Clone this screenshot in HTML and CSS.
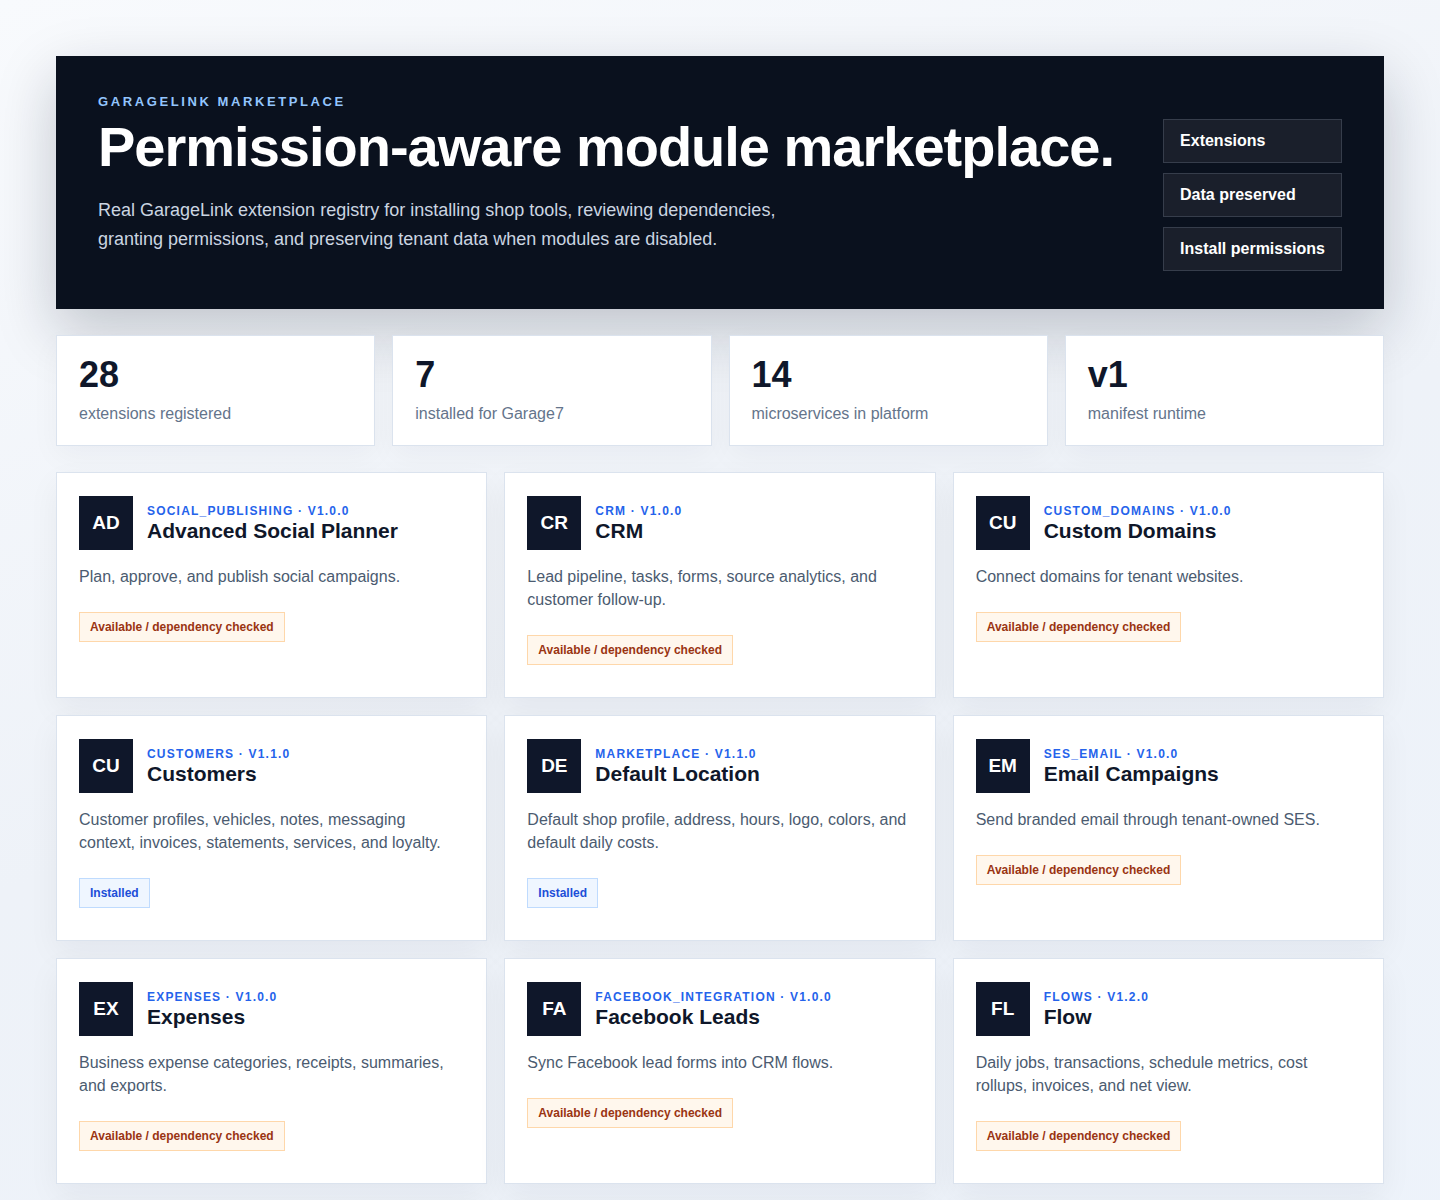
FILE: index.html
```html
<!DOCTYPE html>
<html lang="en">
<head>
    <meta charset="UTF-8">
    <meta name="viewport" content="width=device-width, initial-scale=1.0">
    <title>GarageLink Marketplace</title>
    <link rel="stylesheet" href="styles.css">
</head>
<body>
    <div class="page">
        <header class="hero">
            <div class="hero-copy">
                <div class="eyebrow">GarageLink Marketplace</div>
                <h1>Permission-aware module marketplace.</h1>
                <p>Real GarageLink extension registry for installing shop tools, reviewing dependencies, granting permissions, and preserving tenant data when modules are disabled.</p>
            </div>
            <nav class="hero-actions">
                <button type="button">Extensions</button>
                <button type="button">Data preserved</button>
                <button type="button">Install permissions</button>
            </nav>
        </header>

        <section class="stats">
            <div class="stat">
                <div class="stat-value">28</div>
                <div class="stat-label">extensions registered</div>
            </div>
            <div class="stat">
                <div class="stat-value">7</div>
                <div class="stat-label">installed for Garage7</div>
            </div>
            <div class="stat">
                <div class="stat-value">14</div>
                <div class="stat-label">microservices in platform</div>
            </div>
            <div class="stat">
                <div class="stat-value">v1</div>
                <div class="stat-label">manifest runtime</div>
            </div>
        </section>

        <section class="modules">
            <article class="module">
                <div class="module-head">
                    <div class="module-icon">AD</div>
                    <div>
                        <div class="module-meta">social_publishing · v1.0.0</div>
                        <h2>Advanced Social Planner</h2>
                    </div>
                </div>
                <p>Plan, approve, and publish social campaigns.</p>
                <span class="badge badge-available">Available / dependency checked</span>
            </article>

            <article class="module">
                <div class="module-head">
                    <div class="module-icon">CR</div>
                    <div>
                        <div class="module-meta">crm · v1.0.0</div>
                        <h2>CRM</h2>
                    </div>
                </div>
                <p>Lead pipeline, tasks, forms, source analytics, and customer follow-up.</p>
                <span class="badge badge-available">Available / dependency checked</span>
            </article>

            <article class="module">
                <div class="module-head">
                    <div class="module-icon">CU</div>
                    <div>
                        <div class="module-meta">custom_domains · v1.0.0</div>
                        <h2>Custom Domains</h2>
                    </div>
                </div>
                <p>Connect domains for tenant websites.</p>
                <span class="badge badge-available">Available / dependency checked</span>
            </article>

            <article class="module">
                <div class="module-head">
                    <div class="module-icon">CU</div>
                    <div>
                        <div class="module-meta">customers · v1.1.0</div>
                        <h2>Customers</h2>
                    </div>
                </div>
                <p>Customer profiles, vehicles, notes, messaging context, invoices, statements, services, and loyalty.</p>
                <span class="badge badge-installed">Installed</span>
            </article>

            <article class="module">
                <div class="module-head">
                    <div class="module-icon">DE</div>
                    <div>
                        <div class="module-meta">marketplace · v1.1.0</div>
                        <h2>Default Location</h2>
                    </div>
                </div>
                <p>Default shop profile, address, hours, logo, colors, and default daily costs.</p>
                <span class="badge badge-installed">Installed</span>
            </article>

            <article class="module">
                <div class="module-head">
                    <div class="module-icon">EM</div>
                    <div>
                        <div class="module-meta">ses_email · v1.0.0</div>
                        <h2>Email Campaigns</h2>
                    </div>
                </div>
                <p>Send branded email through tenant-owned SES.</p>
                <span class="badge badge-available">Available / dependency checked</span>
            </article>

            <article class="module">
                <div class="module-head">
                    <div class="module-icon">EX</div>
                    <div>
                        <div class="module-meta">expenses · v1.0.0</div>
                        <h2>Expenses</h2>
                    </div>
                </div>
                <p>Business expense categories, receipts, summaries, and exports.</p>
                <span class="badge badge-available">Available / dependency checked</span>
            </article>

            <article class="module">
                <div class="module-head">
                    <div class="module-icon">FA</div>
                    <div>
                        <div class="module-meta">facebook_integration · v1.0.0</div>
                        <h2>Facebook Leads</h2>
                    </div>
                </div>
                <p>Sync Facebook lead forms into CRM flows.</p>
                <span class="badge badge-available">Available / dependency checked</span>
            </article>

            <article class="module">
                <div class="module-head">
                    <div class="module-icon">FL</div>
                    <div>
                        <div class="module-meta">flows · v1.2.0</div>
                        <h2>Flow</h2>
                    </div>
                </div>
                <p>Daily jobs, transactions, schedule metrics, cost rollups, invoices, and net view.</p>
                <span class="badge badge-available">Available / dependency checked</span>
            </article>

            <article class="module">
                <div class="module-head">
                    <div class="module-icon">FO</div>
                    <div>
                        <div class="module-meta">forms · v1.0.0</div>
                        <h2>Forms</h2>
                    </div>
                </div>
                <p>Build intake forms and route submissions into CRM.</p>
                <span class="badge badge-available">Available / dependency checked</span>
            </article>

            <article class="module">
                <div class="module-head">
                    <div class="module-icon">GI</div>
                    <div>
                        <div class="module-meta">gift_cards · v1.0.0</div>
                        <h2>Gift Cards</h2>
                    </div>
                </div>
                <p>Sell and redeem shop gift cards.</p>
                <span class="badge badge-available">Available / dependency checked</span>
            </article>

            <article class="module">
                <div class="module-head">
                    <div class="module-icon">GO</div>
                    <div>
                        <div class="module-meta">google_business · v1.0.0</div>
                        <h2>Google Business</h2>
                    </div>
                </div>
                <p>Sync reviews and profile details from Google.</p>
                <span class="badge badge-available">Available / dependency checked</span>
            </article>
        </section>
    </div>
</body>
</html>
```

FILE: styles.css
```css
body {
    margin: 0;
    font-family: "Liberation Sans", Arial, sans-serif;
    color: #0f172a;
    background: linear-gradient(160deg, #f8fafd 0%, #eef2f8 45%, #edf3fb 100%);
    min-height: 100vh;
}
.page {
    max-width: 1328px;
    margin: 0 auto;
    padding: 56px 0;
}

/* hero */
.hero {
    display: flex;
    justify-content: space-between;
    align-items: flex-end;
    gap: 40px;
    background-color: #0a111e;
    color: #fff;
    padding: 38px 42px;
    box-shadow: 0 22px 56px rgba(15, 23, 42, 0.22);
}
.eyebrow {
    font-size: 13px;
    line-height: 16px;
    font-weight: 700;
    letter-spacing: 2.6px;
    text-transform: uppercase;
    color: #93c5fd;
    margin-bottom: 6px;
}
.hero h1 {
    margin: 0;
    font-size: 56px;
    line-height: 1.1;
    font-weight: 700;
    letter-spacing: -1px;
    white-space: nowrap;
}
.hero p {
    max-width: 700px;
    margin: 18px 0 17px;
    font-size: 18px;
    line-height: 29px;
    color: #cbd5e1;
}
.hero-actions {
    display: flex;
    flex-direction: column;
    gap: 10px;
}
.hero-actions button {
    font-family: inherit;
    text-align: left;
    font-size: 16px;
    line-height: 18px;
    font-weight: 700;
    color: #fff;
    background-color: #1a1f2b;
    border: 1px solid #363d4b;
    padding: 12px 16px;
    white-space: nowrap;
    cursor: pointer;
}

/* stats */
.stats {
    display: grid;
    grid-template-columns: repeat(4, 1fr);
    gap: 17px;
    margin-top: 26px;
}
.stat {
    background-color: #fff;
    border: 1px solid #dbe3ee;
    padding: 19px 22px 20px;
    box-shadow: 0 10px 28px rgba(15, 23, 42, 0.04);
}
.stat-value {
    font-size: 36px;
    line-height: 40px;
    font-weight: 700;
}
.stat-label {
    margin-top: 8px;
    font-size: 16px;
    line-height: 22px;
    color: #64748b;
}

/* modules */
.modules {
    display: grid;
    grid-template-columns: repeat(3, 1fr);
    gap: 17px;
    margin-top: 26px;
}
.module {
    background-color: #fff;
    border: 1px solid #dbe3ee;
    padding: 23px 22px 32px;
    box-shadow: 0 12px 30px rgba(15, 23, 42, 0.05);
}
.module-head {
    display: flex;
    align-items: center;
    gap: 14px;
    margin-bottom: 15px;
}
.module-icon {
    flex: none;
    width: 54px;
    height: 54px;
    display: flex;
    align-items: center;
    justify-content: center;
    background-color: #0f172a;
    color: #fff;
    font-size: 19px;
    font-weight: 700;
}
.module-meta {
    font-size: 12px;
    line-height: 14px;
    font-weight: 700;
    letter-spacing: 1.2px;
    text-transform: uppercase;
    color: #2563eb;
}
.module h2 {
    margin: 1px 0 0;
    font-size: 21px;
    line-height: 23px;
    font-weight: 700;
}
.module p {
    margin: 0 0 24px;
    font-size: 16px;
    line-height: 23px;
    color: #4b5b70;
}
.badge {
    display: inline-block;
    font-size: 12px;
    line-height: 16px;
    font-weight: 700;
    padding: 6px 10px;
    border: 1px solid;
}
.badge-available {
    color: #9a3412;
    background-color: #fff7ed;
    border-color: #fed7aa;
}
.badge-installed {
    color: #1d4ed8;
    background-color: #eff6ff;
    border-color: #bfdbfe;
}
```
